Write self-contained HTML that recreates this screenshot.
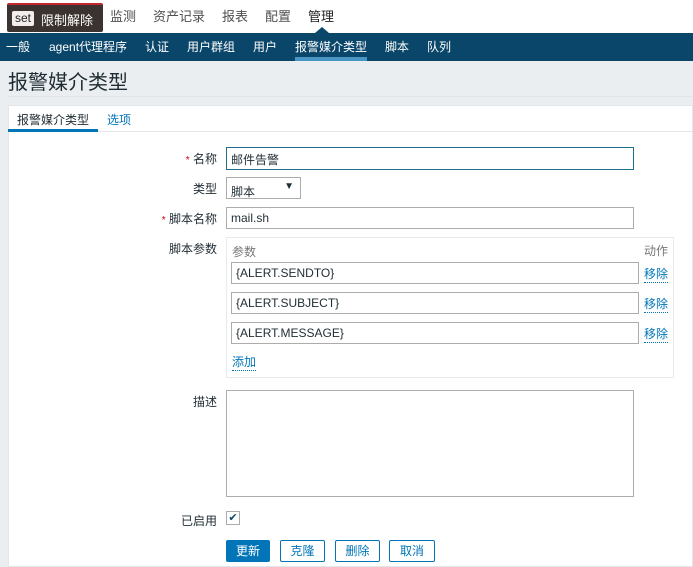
<!DOCTYPE html><html><head><meta charset="utf-8"><style>
*{box-sizing:border-box;margin:0;padding:0}
body{width:693px;height:567px;overflow:hidden;background:#ebeef0;font-family:"Liberation Sans","Noto Sans CJK SC",sans-serif;font-size:12px;color:#1f2c33;position:relative}
.top{position:absolute;left:0;top:0;width:693px;height:33px;background:#fff}
.top span{position:absolute;top:6px;font-size:13px;color:#4f4f4f}
.badge{position:absolute;left:7px;top:3px;width:96px;height:29px;background:#3a3330;border-top:2px solid #c0282d;border-radius:2px}
.badge i{position:absolute;left:5px;top:6px;background:#f3eded;color:#222;font-style:normal;font-size:12px;padding:0 3px;height:15px;line-height:15px;border-radius:2px}
.badge b{position:absolute;left:34px;top:5px;color:#fff;font-weight:normal;font-size:13px}
.nav{position:absolute;left:0;top:33px;width:693px;height:28px;background:#0a466a}
.nav span{position:absolute;top:5px;color:#fff;font-size:12px}
.arrow{position:absolute;left:315px;top:27px;width:0;height:0;border-left:7px solid transparent;border-right:7px solid transparent;border-bottom:6px solid #0a466a}
h1{position:absolute;left:8px;top:66px;font-size:20px;font-weight:normal;color:#1f2c33}
.hr{position:absolute;left:8px;top:96px;width:685px;height:1px;background:#dfe4e7}
.panel{position:absolute;left:8px;top:105px;width:685px;height:462px;background:#fff;border:1px solid #e3e7ea}
.tabs{position:absolute;left:8px;top:105px;width:685px;height:27px;border-bottom:1px solid #e3e7ea}
.lbl{position:absolute;font-size:12px;text-align:right;width:150px;left:67px}
.lbl em{color:#d40000;font-style:normal;font-size:10px}
.inp{position:absolute;border:1px solid #acacac;background:#fff;height:22px;padding:3px 4px;font-size:12px}
a{color:#0275b8;text-decoration:none;border-bottom:1px dotted #0275b8}
.btn{position:absolute;top:540px;height:22px;border:1px solid #0275b8;border-radius:2px;background:#fff;color:#0275b8;font-size:12px;text-align:center;line-height:20px}
</style></head><body>
<div class="top">
<span style="left:110px">监测</span><span style="left:153px">资产记录</span><span style="left:222px">报表</span><span style="left:265px">配置</span><span style="left:308px;color:#222">管理</span>
<div class="badge"><i>set</i><b>限制解除</b></div>
<div class="arrow"></div>
</div>
<div class="nav">
<span style="left:6px">一般</span><span style="left:49px">agent代理程序</span><span style="left:145px">认证</span><span style="left:187px">用户群组</span><span style="left:253px">用户</span><span style="left:295px">报警媒介类型</span><span style="left:385px">脚本</span><span style="left:427px">队列</span>
<div style="position:absolute;left:295px;top:24px;width:72px;height:4px;background:#4796c4"></div>
</div>
<h1>报警媒介类型</h1>
<div class="hr"></div>
<div class="panel"></div>
<div class="tabs">
<span style="position:absolute;left:9px;top:6px">报警媒介类型</span>
<span style="position:absolute;left:99px;top:6px;color:#0275b8">选项</span>
<div style="position:absolute;left:0;top:24px;width:90px;height:3px;background:#0275b8"></div>
</div>
<div class="lbl" style="top:150px"><em>*</em> 名称</div>
<div class="inp" style="left:226px;top:147px;width:408px;border-color:#1f6e8e;height:23px">邮件告警</div>
<div class="lbl" style="top:180px">类型</div>
<div class="inp" style="left:226px;top:177px;width:75px;padding-top:5px">脚本<span style="position:absolute;right:6px;top:3px;font-size:10px">▼</span></div>
<div class="lbl" style="top:210px"><em>*</em> 脚本名称</div>
<div class="inp" style="left:226px;top:207px;width:408px">mail.sh</div>
<div class="lbl" style="top:240px">脚本参数</div>
<div style="position:absolute;left:226px;top:237px;width:448px;height:141px;border:1px solid #e8ebed"></div>
<span style="position:absolute;left:232px;top:243px;color:#777">参数</span>
<span style="position:absolute;left:644px;top:242px;color:#777">动作</span>
<div class="inp" style="left:231px;top:262px;width:408px">{ALERT.SENDTO}</div><a style="position:absolute;left:644px;top:265px">移除</a>
<div class="inp" style="left:231px;top:292px;width:408px">{ALERT.SUBJECT}</div><a style="position:absolute;left:644px;top:295px">移除</a>
<div class="inp" style="left:231px;top:322px;width:408px">{ALERT.MESSAGE}</div><a style="position:absolute;left:644px;top:325px">移除</a>
<a style="position:absolute;left:232px;top:353px">添加</a>
<div class="lbl" style="top:393px">描述</div>
<div class="inp" style="left:226px;top:390px;width:408px;height:107px"></div>
<div class="lbl" style="top:512px">已启用</div>
<div style="position:absolute;left:226px;top:511px;width:14px;height:14px;border:1px solid #acacac;color:#0a466a;font-size:11px;line-height:12px;text-align:center">✔</div>
<div class="btn" style="left:226px;width:44px;background:#0275b8;color:#fff">更新</div>
<div class="btn" style="left:280px;width:45px">克隆</div>
<div class="btn" style="left:335px;width:45px">删除</div>
<div class="btn" style="left:389px;width:46px">取消</div>
</body></html>
